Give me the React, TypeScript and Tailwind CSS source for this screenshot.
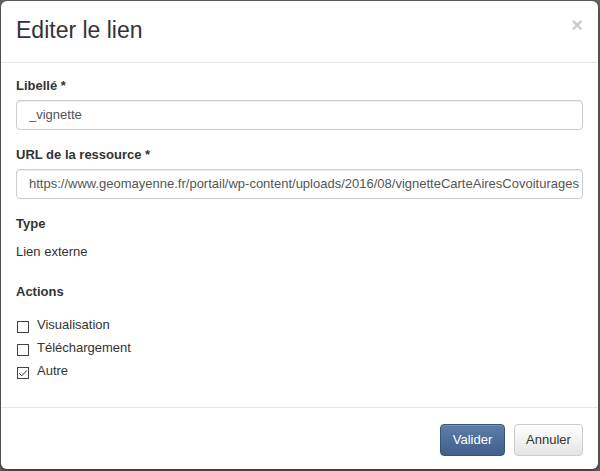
const FONT = { fontFamily: '"Liberation Sans", Arial, Helvetica, sans-serif' };

function Field({ label, value }: { label: string; value: string }) {
  return (
    <div className="mb-[16px]">
      <label className="block font-bold text-[13px] leading-[18px] mb-[5px]">{label}</label>
      <div className="h-[30px] pl-[12px] pr-[3px] flex items-center text-[13px] text-[#555] bg-white border border-[#ccc] rounded-[4px] shadow-[inset_0_1px_1px_rgba(0,0,0,0.075)]">
        <div className="flex-1 overflow-hidden whitespace-nowrap">{value}</div>
      </div>
    </div>
  );
}

function Check({ label, checked }: { label: string; checked?: boolean }) {
  return (
    <div className="flex items-start h-[18px] mb-[5px] text-[13px] leading-[18px]">
      <span className="mt-[5px] ml-[1px] w-[12px] h-[12px] border border-[#444] bg-white flex items-center justify-center shrink-0">
        {checked && (
          <svg width="10" height="10" viewBox="0 0 10 10" fill="none">
            <path d="M1.2 5.2 L3.8 7.8 L8.8 2.4" stroke="#333" strokeWidth="1" />
          </svg>
        )}
      </span>
      <span className="ml-[8px]">{label}</span>
    </div>
  );
}

export default function App() {
  return (
    <div className="w-[600px] h-[471px] bg-[#666] pl-px pt-px overflow-hidden text-[#333]" style={FONT}>
      <div className="w-[597px] h-[468px] bg-white rounded-[6px] shadow-[0_3px_9px_rgba(0,0,0,0.5)] flex flex-col">
        {/* Header */}
        <div className="flex items-start justify-between h-[62px] px-[15px] border-b border-[#e5e5e5] shrink-0">
          <h4 className="mt-[17px] text-[23px] leading-[1.1] font-normal">Editer le lien</h4>
          <button className="mt-[14px] text-[20px] leading-none font-bold text-[#000] opacity-20 cursor-pointer">×</button>
        </div>

        {/* Body */}
        <div className="flex-1 px-[15px] pt-[14px]">
          <Field label="Libellé *" value="_vignette" />
          <Field
            label="URL de la ressource *"
            value="https://www.geomayenne.fr/portail/wp-content/uploads/2016/08/vignetteCarteAiresCovoiturages.png"
          />
          <div className="font-bold text-[13px] leading-[18px] mb-[10px]">Type</div>
          <div className="text-[13px] leading-[18px] mb-[22px]">Lien externe</div>
          <div className="font-bold text-[13px] leading-[18px] mb-[15px]">Actions</div>
          <Check label="Visualisation" />
          <Check label="Téléchargement" />
          <Check label="Autre" checked />
        </div>

        {/* Footer */}
        <div className="h-[62px] border-t border-[#e5e5e5] flex justify-end items-start gap-[9px] pt-[16px] px-[15px] shrink-0">
          <button className="w-[65px] h-[32px] text-[13px] text-white rounded-[4px] border border-[#3a5479] bg-gradient-to-b from-[#5d7ea8] to-[#40608b] shadow-[inset_0_1px_0_rgba(255,255,255,0.15)]">
            Valider
          </button>
          <button className="w-[69px] h-[32px] text-[13px] text-[#333] rounded-[4px] border border-[#ccc] bg-gradient-to-b from-white to-[#e4e4e4] shadow-[inset_0_1px_0_rgba(255,255,255,0.15)]">
            Annuler
          </button>
        </div>
      </div>
    </div>
  );
}
